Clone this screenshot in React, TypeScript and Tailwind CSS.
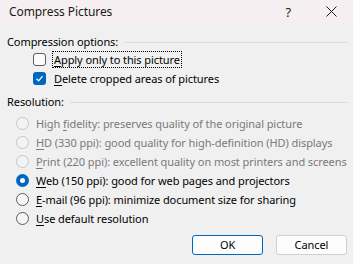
import React from "react";

const font = { fontFamily: '"Noto Sans", "Open Sans", sans-serif' };

function U({ children }: { children: React.ReactNode }) {
  return <span className="underline underline-offset-2 decoration-1">{children}</span>;
}

function Checkbox({ checked }: { checked: boolean }) {
  if (checked) {
    return (
      <div className="w-[13px] h-[13px] rounded-[3px] bg-[#0067c0] flex items-center justify-center shrink-0">
        <svg width="9" height="9" viewBox="0 0 9 9">
          <polyline points="1.5,4.8 3.6,6.8 7.6,2.2" fill="none" stroke="#ffffff" strokeWidth="1.2" />
        </svg>
      </div>
    );
  }
  return <div className="w-[13px] h-[13px] rounded-[3px] border border-[#5c5c5c] bg-[#fbfbfb] shrink-0" />;
}

function Radio({ state }: { state: "disabled" | "on" | "off" }) {
  if (state === "on") {
    return (
      <div className="w-[13px] h-[13px] rounded-full bg-[#0067c0] flex items-center justify-center shrink-0">
        <div className="w-[5px] h-[5px] rounded-full bg-white" />
      </div>
    );
  }
  if (state === "disabled") {
    return <div className="w-[13px] h-[13px] rounded-full border border-[#c6c6c6] bg-[#f3f3f3] shrink-0" />;
  }
  return <div className="w-[13px] h-[13px] rounded-full border border-[#5c5c5c] bg-[#f6f6f6] shrink-0" />;
}

function RadioRow({
  state,
  children,
}: {
  state: "disabled" | "on" | "off";
  children: React.ReactNode;
}) {
  return (
    <div className="h-[19px] flex items-center pl-[9px]">
      <Radio state={state} />
      <span className={"ml-[7px] whitespace-nowrap " + (state === "disabled" ? "text-[#7a7a7a]" : "text-[#000000]")}>
        {children}
      </span>
    </div>
  );
}

export default function App() {
  return (
    <div className="w-[353px] h-[264px] bg-[#f0f0f0] text-[11px] leading-[16px] tracking-[-0.08px] text-black overflow-hidden" style={font}>
      <div className="h-[23px] bg-[#f6eff1] flex items-center pl-[9px] pr-[16px]">
        <span className="text-[12px] text-[#1a1a1a] flex-1">Compress Pictures</span>
        <span className="text-[13px] text-[#1a1a1a] mr-[35px]">?</span>
        <svg width="11" height="11" viewBox="0 0 11 11">
          <path d="M0.5 0.5 L10.5 10.5 M10.5 0.5 L0.5 10.5" stroke="#1a1a1a" strokeWidth="1" />
        </svg>
      </div>
      <div className="px-[7px] pr-[5px]">
        <div className="mt-[11px] h-[16px] flex items-center">
          <span className="whitespace-nowrap">Compression options:</span>
          <div className="flex-1 h-px bg-[#dcdcdc] ml-[6px]" />
        </div>
        <div className="h-[19px] flex items-center pl-[26px]">
          <Checkbox checked={false} />
          <span className="ml-[6px] px-[1px] border border-dotted border-[#000000] leading-[15px] whitespace-nowrap">
            <U>A</U>pply only to this picture
          </span>
        </div>
        <div className="h-[19px] flex items-center pl-[26px]">
          <Checkbox checked={true} />
          <span className="ml-[8px] whitespace-nowrap">
            <U>D</U>elete cropped areas of pictures
          </span>
        </div>
        <div className="mt-[6px] h-[16px] flex items-center">
          <span className="whitespace-nowrap">Resolution:</span>
          <div className="flex-1 h-px bg-[#dcdcdc] ml-[6px]" />
        </div>
        <div className="mt-[4px]">
          <RadioRow state="disabled">
            High <U>f</U>idelity: preserves quality of the original picture
          </RadioRow>
          <RadioRow state="disabled">
            <U>H</U>D (330 ppi): good quality for high-definition (HD) displays
          </RadioRow>
          <RadioRow state="disabled">
            <U>P</U>rint (220 ppi): excellent quality on most printers and screens
          </RadioRow>
          <RadioRow state="on">
            <U>W</U>eb (150 ppi): good for web pages and projectors
          </RadioRow>
          <RadioRow state="off">
            <U>E</U>-mail (96 ppi): minimize document size for sharing
          </RadioRow>
          <RadioRow state="off">
            <U>U</U>se default resolution
          </RadioRow>
        </div>
        <div className="mt-[7px] flex justify-end gap-[13px] pr-[1px]">
          <button className="w-[71px] h-[20px] rounded-[3px] border border-[#0067c0] bg-[#fdfdfd] text-[11px] leading-[16px] text-black flex items-center justify-center" style={font}>
            OK
          </button>
          <button className="w-[71px] h-[20px] rounded-[3px] border border-[#d0d0d0] bg-[#fdfdfd] text-[11px] leading-[16px] text-black flex items-center justify-center" style={font}>
            Cancel
          </button>
        </div>
      </div>
    </div>
  );
}
